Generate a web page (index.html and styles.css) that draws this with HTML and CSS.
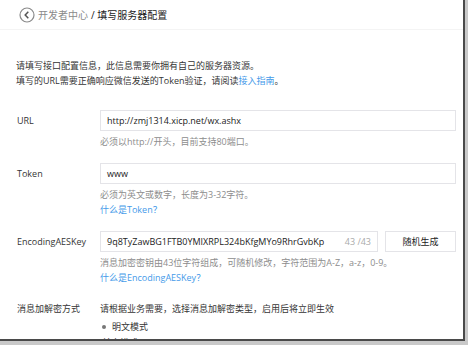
FILE: index.html
```html
<!DOCTYPE html>
<html lang="zh-CN">

<head>
    <meta charset="UTF-8">
    <title>填写服务器配置</title>
    <link rel="stylesheet" href="styles.css">
</head>

<body>
    <div class="frame">
        <!-- Cabeçalho -->
        <div class="header">
            <svg class="back" width="16" height="16" viewBox="0 0 16 16">
                <circle cx="8" cy="8" r="7" fill="none" stroke="#8a8a8a" stroke-width="1.2"/>
                <path d="M9.3 4.8 L6.2 8 L9.3 11.2" fill="none" stroke="#555" stroke-width="1.5"/>
            </svg>
            <span class="crumb">开发者中心</span>
            <span class="crumb-cur">/ 填写服务器配置</span>
        </div>

        <div class="intro">
            请填写接口配置信息，此信息需要你拥有自己的服务器资源。<br>
            填写的URL需要正确响应微信发送的Token验证，请阅读<a href="#">接入指南</a>。
        </div>

        <div class="row">
            <div class="label">URL</div>
            <div class="field">
                <div class="input">http://zmj1314.xicp.net/wx.ashx</div>
                <p class="hint">必须以http://开头，目前支持80端口。</p>
            </div>
        </div>

        <div class="row">
            <div class="label">Token</div>
            <div class="field">
                <div class="input">www</div>
                <p class="hint">必须为英文或数字，长度为3-32字符。</p>
                <a class="hint" href="#">什么是Token？</a>
            </div>
        </div>

        <div class="row">
            <div class="label">EncodingAESKey</div>
            <div class="field">
                <div class="key-line">
                    <div class="input key">
                        <span>9q8TyZawBG1FTB0YMIXRPL324bKfgMYo9RhrGvbKp</span>
                        <span class="count">43 /43</span>
                    </div>
                    <button class="btn">随机生成</button>
                </div>
                <p class="hint">消息加密密钥由43位字符组成，可随机修改，字符范围为A-Z，a-z，0-9。</p>
                <a class="hint" href="#">什么是EncodingAESKey？</a>
            </div>
        </div>

        <div class="row mode">
            <div class="label">消息加解密方式</div>
            <div class="field">
                <div class="mode-text">请根据业务需要，选择消息加解密类型，启用后将立即生效</div>
                <div class="radio"><i class="dot"></i>明文模式</div>
                <div class="radio">兼容模式</div>
            </div>
        </div>
    </div>
</body>

</html>
```

FILE: styles.css
```css
body {
    margin: 0;
    background-color: #c9c9c9;
    font-family: "Open Sans", "Noto Sans CJK SC", sans-serif;
    font-size: 9px;
    color: #353535;
}

.frame { /* area branca com sombra */
    width: 463px;
    height: 339px;
    background-color: white;
    border-right: 2px solid #4a4a4a;
    border-bottom: 2px solid #4a4a4a;
    overflow: hidden;
}

.header {
    height: 30px;
    display: flex;
    align-items: center;
    padding-left: 19px;
    border-bottom: 1px solid #f4f4f4;
    box-sizing: border-box;
    font-size: 10px;
}

.back {
    margin-right: 3px;
}

.crumb {
    color: #8a8a8a;
}

.crumb-cur {
    margin-left: 3px;
    color: #222;
}

.intro {
    margin: 28px 0 0 16px;
    line-height: 15px;
}

a {
    color: #459ae9;
    text-decoration: none;
}

.row {
    display: flex;
    margin-top: 22px;
    padding-left: 17px;
}

.row + .row {
    margin-top: 14px;
}

.label {
    width: 83px;
    line-height: 21px;
    flex-shrink: 0;
}

.field {
    width: 356px;
}

.input {
    height: 21px;
    line-height: 19px;
    border: 1px solid #e4e4e8;
    box-sizing: border-box;
    padding-left: 6px;
    color: #222;
}

.hint {
    display: block;
    margin: 3px 0 0;
    line-height: 15px;
    color: #8d8d8d;
}

a.hint {
    margin: 0;
    color: #459ae9;
}

.key-line {
    display: flex;
    gap: 7px;
}

.key {
    flex: 1;
    display: flex;
    justify-content: space-between;
    padding-right: 6px;
    white-space: nowrap;
}

.count {
    color: #aaa;
}

.btn {
    width: 71px;
    height: 21px;
    padding: 0;
    background-color: white;
    border: 1px solid #e4e4e8;
    font-family: inherit;
    font-size: 9px;
    color: #222;
}

.mode .label, .mode-text {
    line-height: 20px;
}

.radio {
    display: flex;
    align-items: center;
    line-height: 16px;
    padding-left: 2px;
}

.dot {
    width: 4px;
    height: 4px;
    border-radius: 50%;
    background-color: #777;
    margin-right: 6px;
}
```
